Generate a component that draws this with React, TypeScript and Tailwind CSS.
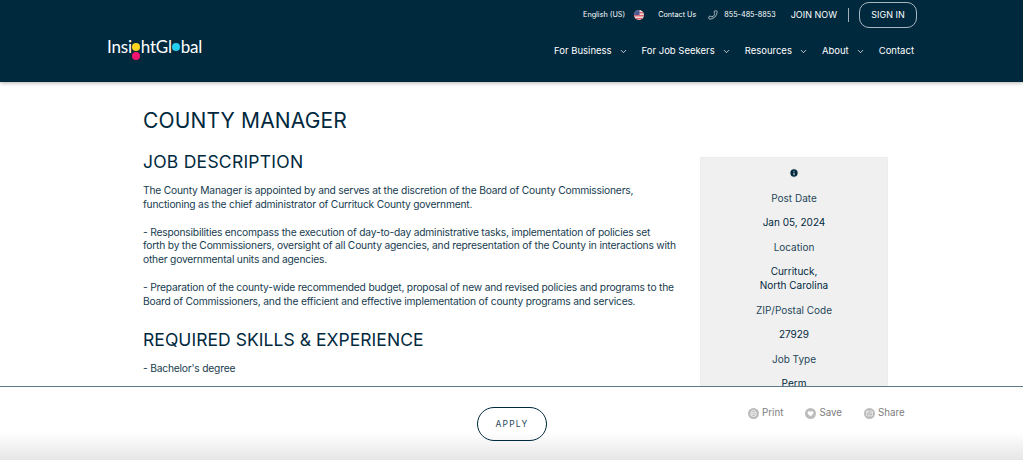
import { ChevronDown, Phone, Info, Printer, Heart, Mail } from "lucide-react";

const font = "font-['Inter','Liberation_Sans',sans-serif]";

const navItems = [
  { label: "For Business", caret: true },
  { label: "For Job Seekers", caret: true },
  { label: "Resources", caret: true },
  { label: "About", caret: true },
  { label: "Contact", caret: false },
];

const paragraphs = [
  [
    "The County Manager is appointed by and serves at the discretion of the Board of County Commissioners,",
    "functioning as the chief administrator of Currituck County government.",
  ],
  [
    "- Responsibilities encompass the execution of day-to-day administrative tasks, implementation of policies set",
    "forth by the Commissioners, oversight of all County agencies, and representation of the County in interactions with",
    "other governmental units and agencies.",
  ],
  [
    "- Preparation of the county-wide recommended budget, proposal of new and revised policies and programs to the",
    "Board of Commissioners, and the efficient and effective implementation of county programs and services.",
  ],
];

const details = [
  { label: "Post Date", value: ["Jan 05, 2024"] },
  { label: "Location", value: ["Currituck,", "North Carolina"] },
  { label: "ZIP/Postal Code", value: ["27929"] },
  { label: "Job Type", value: ["Perm"] },
];

const Logo = () => (
  <div className="flex items-center text-[17px] leading-none tracking-[-0.2px] text-white font-['Lato',sans-serif]">
    <span>Insi</span>
    <span className="relative mx-[0.5px] h-[8px] w-[8px] rounded-full bg-[#fdd31f]">
      <span className="absolute left-0 top-[9px] h-[8px] w-[8px] rounded-full bg-[#f2146e]" />
    </span>
    <span>htGl</span>
    <span className="mx-[0.5px] h-[8px] w-[8px] rounded-full bg-[#22cdee]" />
    <span>bal</span>
  </div>
);

const Flag = () => (
  <svg width="10" height="10" viewBox="0 0 10 10">
    <clipPath id="flag">
      <circle cx="5" cy="5" r="5" />
    </clipPath>
    <g clipPath="url(#flag)">
      <rect width="10" height="10" fill="#f3d5d5" />
      <rect y="2" width="10" height="1.4" fill="#d9666f" />
      <rect y="5" width="10" height="1.4" fill="#d9666f" />
      <rect y="8" width="10" height="1.4" fill="#d9666f" />
      <rect width="5.5" height="5" fill="#4a5a94" />
    </g>
  </svg>
);

const Header = () => (
  <header className="relative z-10 flex h-[82px] shrink-0 bg-[#00293e] pl-[107px] pr-[106px] text-white shadow-[0_1px_4px_rgba(0,0,0,0.3)]">
    <div className="mt-[38px]">
      <Logo />
    </div>
    <div className="ml-auto flex flex-col items-end">
      <div className="mt-[2px] flex h-[26px] items-center">
        <span className="text-[7.25px]">English (US)</span>
        <span className="ml-[9px]">
          <Flag />
        </span>
        <span className="ml-[14px] text-[7.25px]">Contact Us</span>
        <Phone size={10} strokeWidth={1.5} className="ml-[12px] scale-x-[-1]" />
        <span className="ml-[6px] text-[7.25px]">855-485-8853</span>
        <span className="ml-[15px] text-[9px]">JOIN NOW</span>
        <span className="ml-[11px] h-[14px] w-px bg-[#9fb0ba]" />
        <span className="ml-[10px] flex h-[26px] w-[58px] items-center justify-center rounded-[10px] border border-[#a9b8c0] text-[9px]">
          SIGN IN
        </span>
      </div>
      <nav className="mt-[16px] flex items-center pr-[3px] text-[9.5px]">
        {navItems.map((item) => (
          <span key={item.label} className="flex items-center">
            <span>{item.label}</span>
            {item.caret && <ChevronDown size={9} strokeWidth={2} className="ml-[7px] mr-[14px]" />}
          </span>
        ))}
      </nav>
    </div>
  </header>
);

const Sidebar = () => (
  <aside className="ml-[24px] mt-[75px] h-[400px] w-[188px] shrink-0 border border-[#ececec] bg-[#f0f0f0] pt-[10px] text-center text-[10px] text-[#00293e]">
    <Info size={10} strokeWidth={2.5} className="mx-auto mb-[8px] fill-[#00293e] stroke-[#f0f0f0]" />
    {details.map((row) => (
      <div key={row.label}>
        <p className="h-[25px] pt-[5px] leading-[14px] text-[#26475a]">{row.label}</p>
        <div className="pb-[6px] pt-[4px] leading-[14px]">
          {row.value.map((line) => (
            <p key={line}>{line}</p>
          ))}
        </div>
      </div>
    ))}
  </aside>
);

const ShareLink = ({ label, icon }: { label: string; icon: React.ReactNode }) => (
  <span className="flex items-center gap-[3px] text-[9.75px] text-[#7d7d7d]">
    <span className="flex h-[11px] w-[11px] items-center justify-center rounded-full bg-[#bcbcbc] text-white">{icon}</span>
    {label}
  </span>
);

export default function App() {
  return (
    <div className={`flex h-[460px] flex-col overflow-hidden bg-white ${font}`}>
      <Header />
      <main className="flex min-h-0 flex-1 overflow-hidden pl-[143px]">
        <div className="w-[533px] shrink-0 text-[#00293e]">
          <h1 className="mt-[26px] text-[21px] font-normal leading-[26px] tracking-[0.15px]">COUNTY MANAGER</h1>
          <h2 className="mt-[17px] text-[17.5px] font-normal leading-[22px] tracking-[0.25px]">JOB DESCRIPTION</h2>
          <div className="mt-[11px] text-[10.25px] leading-[13.85px] tracking-[-0.2px] text-[#173c50]">
            {paragraphs.map((lines, i) => (
              <p key={i} className="mb-[13.85px] whitespace-nowrap">
                {lines.map((line) => (
                  <span key={line} className="block">
                    {line}
                  </span>
                ))}
              </p>
            ))}
          </div>
          <h2 className="mt-[20px] text-[17.5px] font-normal leading-[22px] tracking-[0.05px]">REQUIRED SKILLS &amp; EXPERIENCE</h2>
          <p className="mt-[10px] text-[10.25px] leading-[14px] tracking-[-0.2px] text-[#173c50]">- Bachelor's degree</p>
        </div>
        <Sidebar />
      </main>
      <footer className="relative flex h-[74px] shrink-0 border-t border-[#5d7a87] bg-gradient-to-b from-white from-[62%] to-[#e6e6e6]">
        <button className="ml-[477px] mt-[20px] h-[34px] w-[70px] rounded-[17px] border border-[#00293e] text-[8.5px] tracking-[1.2px] text-[#26475a]">
          APPLY
        </button>
        <div className="ml-[201px] mt-[20px] flex h-[13px] gap-[22px]">
          <ShareLink label="Print" icon={<Printer size={7} strokeWidth={2} />} />
          <ShareLink label="Save" icon={<Heart size={7} fill="white" strokeWidth={0} />} />
          <ShareLink label="Share" icon={<Mail size={7} strokeWidth={2} />} />
        </div>
      </footer>
    </div>
  );
}
